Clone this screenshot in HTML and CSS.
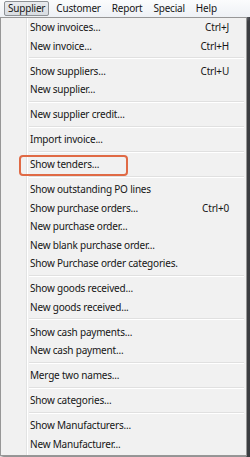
FILE: index.html
```html
<!DOCTYPE html>
<html>
<head>
<meta charset="utf-8">
<link rel="stylesheet" href="styles.css">
</head>
<body>
<div class="app">
  <div class="menubar">
    <span class="top active">Supplier</span>
    <span class="top">Customer</span>
    <span class="top">Report</span>
    <span class="top">Special</span>
    <span class="top">Help</span>
  </div>
  <div class="dropdown">
    <div class="item"><span class="label">Show invoices...</span><span class="key">Ctrl+J</span></div>
    <div class="item"><span class="label">New invoice...</span><span class="key">Ctrl+H</span></div>
    <div class="sep"></div>
    <div class="item"><span class="label">Show suppliers...</span><span class="key">Ctrl+U</span></div>
    <div class="item"><span class="label">New supplier...</span></div>
    <div class="sep"></div>
    <div class="item"><span class="label">New supplier credit...</span></div>
    <div class="sep"></div>
    <div class="item"><span class="label">Import invoice...</span></div>
    <div class="sep"></div>
    <div class="item marked"><span class="label">Show tenders...</span></div>
    <div class="sep"></div>
    <div class="item"><span class="label">Show outstanding PO lines</span></div>
    <div class="item"><span class="label">Show purchase orders...</span><span class="key">Ctrl+0</span></div>
    <div class="item"><span class="label">New purchase order...</span></div>
    <div class="item"><span class="label">New blank purchase order...</span></div>
    <div class="item"><span class="label">Show Purchase order categories.</span></div>
    <div class="sep"></div>
    <div class="item"><span class="label">Show goods received...</span></div>
    <div class="item"><span class="label">New goods received...</span></div>
    <div class="sep"></div>
    <div class="item"><span class="label">Show cash payments...</span></div>
    <div class="item"><span class="label">New cash payment...</span></div>
    <div class="sep"></div>
    <div class="item"><span class="label">Merge two names...</span></div>
    <div class="sep"></div>
    <div class="item"><span class="label">Show categories...</span></div>
    <div class="sep"></div>
    <div class="item"><span class="label">Show Manufacturers...</span></div>
    <div class="item"><span class="label">New Manufacturer...</span></div>
  </div>
</div>
</body>
</html>
```
FILE: styles.css
```css
html, body {
  margin: 0;
  padding: 0;
}
body {
  width: 250px;
  height: 457px;
  overflow: hidden;
  background: #8a8c90;
  font-family: "Noto Sans", "Open Sans", sans-serif;
  font-size: 10px;
  letter-spacing: -0.2px;
  color: #161616;
}
.app {
  display: flex;
  flex-direction: column;
  height: 457px;
  background: linear-gradient(to right, #e4e4e4 0, #e4e4e4 246px, #5f6166 247px, #3d3f44 250px);
}
.menubar {
  height: 17px;
  display: flex;
  align-items: center;
  background: linear-gradient(#fbfcfd, #eef1f5);
  padding-left: 4px;
  box-sizing: border-box;
}
.top {
  padding: 0 3px;
  margin-right: 3px;
  height: 15px;
  line-height: 13px;
  box-sizing: border-box;
  border: 1px solid transparent;
}
.top.active {
  border-color: #8e9296;
  border-radius: 2px;
  background: linear-gradient(#e9ebee, #d8dce1);
}
.dropdown {
  width: 247px;
  box-sizing: border-box;
  border: 1px solid #979797;
  background: linear-gradient(to right, #f1f1f1 0, #f1f1f1 25px, #e2e3e3 25px, #e2e3e3 26px, #ffffff 26px, #ffffff 27px, #f1f1f1 27px);
  padding: 0 1px 2px 1px;
  display: flex;
  flex-direction: column;
  box-shadow: 2px 3px 2px rgba(0, 0, 0, 0.35);
}
.item {
  height: 18.5px;
  display: flex;
  align-items: center;
  justify-content: space-between;
  padding-left: 28px;
  padding-right: 16px;
  position: relative;
}
.key {
  text-align: right;
}
.sep {
  height: 6.5px;
  display: flex;
  flex-direction: column;
  justify-content: center;
  margin-left: 27px;
  margin-right: 1px;
}
.sep::before {
  content: "";
  height: 1px;
  background: #e0e0e0;
}
.sep::after {
  content: "";
  height: 1px;
  background: #ffffff;
}
.marked::after {
  content: "";
  position: absolute;
  left: 17px;
  top: 0;
  width: 109px;
  height: 21px;
  box-sizing: border-box;
  border: 2px solid #e06a45;
  border-radius: 4px;
}
```
